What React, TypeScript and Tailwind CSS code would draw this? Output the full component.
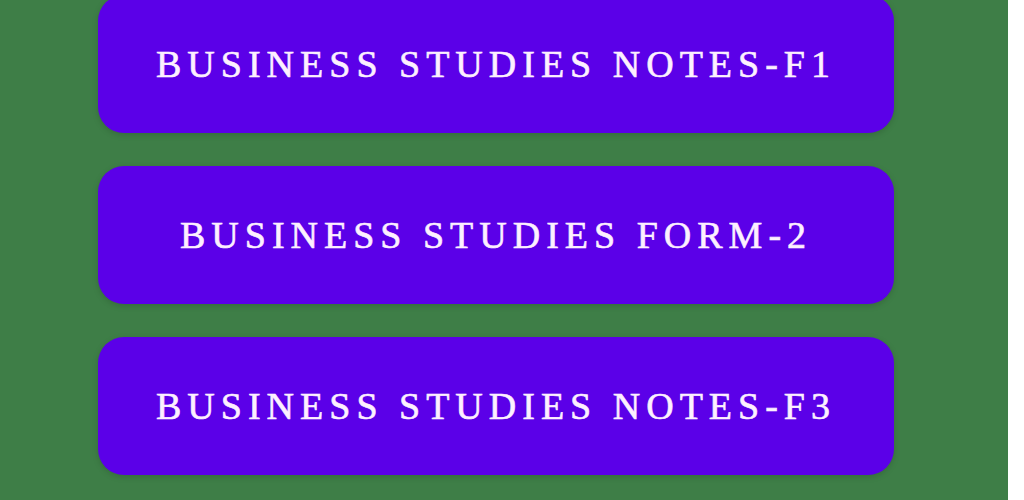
const notes = [
  "Business Studies Notes-F1",
  "Business Studies Form-2",
  "Business Studies Notes-F3",
];

export default function App() {
  return (
    <div className="flex h-[500px] w-full overflow-hidden bg-white">
      {/* links column */}
      <div className="h-full w-[1008px] bg-[#3e7e47] pl-[98px] pr-[114px]">
        <div className="-mt-[5px] flex flex-col gap-[33px]">
          {notes.map((title) => (
            <a
              key={title}
              href="#"
              className="flex h-[138px] items-center justify-center rounded-[26px] bg-[#5b00e8] shadow-[0_2px_6px_rgba(0,0,0,0.15)]"
            >
              <span
                className="text-[38px] uppercase tracking-[6px] text-[#fdf0ff] [-webkit-text-stroke:0.6px_#fdf0ff]"
                style={{ fontFamily: '"Liberation Serif", "DejaVu Serif", serif' }}
              >
                {title}
              </span>
            </a>
          ))}
        </div>
      </div>
    </div>
  );
}
